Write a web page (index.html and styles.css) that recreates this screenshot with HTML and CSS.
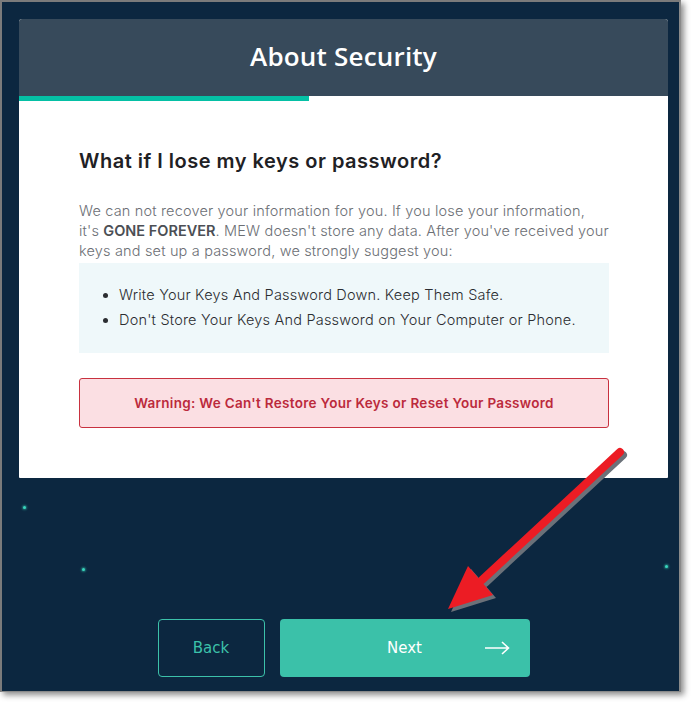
FILE: index.html
```html
<!DOCTYPE html>
<html>
<head>
<meta charset="utf-8">
<link rel="stylesheet" href="styles.css">
</head>
<body>
<div class="window">
  <div class="card">
    <div class="card-header"><h1 class="title">About Security</h1></div>
    <div class="progress"><div class="progress-fill" style="width:44.7%"></div></div>
    <div class="card-body">
      <h2 class="question">What if I lose my keys or password?</h2>
      <p class="text">We can not recover your information for you. If you lose your information,<br>it's <b>GONE FOREVER</b>. MEW doesn't store any data. After you've received your keys and set up a password, we strongly suggest you:</p>
      <div class="tips">
        <ul class="tip-list">
          <li>Write Your Keys And Password Down. Keep Them Safe.</li>
          <li>Don't Store Your Keys And Password on Your Computer or Phone.</li>
        </ul>
      </div>
      <div class="warning">Warning: We Can't Restore Your Keys or Reset Your Password</div>
    </div>
  </div>
  <div class="buttons">
    <button class="btn btn-back">Back</button>
    <button class="btn btn-next"><span class="next-label">Next</span>
      <svg class="next-arrow" width="26" height="14" viewBox="0 0 26 14"><path d="M1 7H24M18 1L24.5 7L18 13" fill="none" stroke="#fff" stroke-width="1.6"/></svg>
    </button>
  </div>
  <span class="star s1"></span>
  <span class="star s2"></span>
  <span class="star s3"></span>
  <svg class="annot" width="691" height="702" viewBox="0 0 691 702">
    <g transform="translate(3,3)" fill="#6b7179" stroke="#6b7179">
      <line x1="620" y1="452" x2="482" y2="580" stroke-width="8" stroke-linecap="round"/>
      <polygon points="448,609 468,566 493,595" stroke="none"/>
    </g>
    <g fill="#ec1c24" stroke="#ec1c24">
      <line x1="620" y1="452" x2="482" y2="580" stroke-width="8" stroke-linecap="round"/>
      <polygon points="448,609 468,566 493,595" stroke="none"/>
    </g>
  </svg>
</div>
</body>
</html>
```

FILE: styles.css
```css
html, body {
  margin: 0;
  padding: 0;
  background: #ffffff;
}
body {
  width: 691px;
  height: 702px;
  overflow: hidden;
}
.window {
  position: relative;
  box-sizing: border-box;
  width: 681px;
  height: 692px;
  background: #0c2740;
  border-left: 2px solid #7b7b7b;
  border-top: 2px solid #7b7b7b;
  border-right: 2px solid #8a8a8a;
  border-bottom: 1px solid #8a8a8a;
  box-shadow: 3px 3px 6px rgba(0,0,0,0.45);
  padding: 17px 11px 0 17px;
}
.card {
  width: 649px;
  background: #ffffff;
  border-radius: 3px 3px 1px 1px;
  overflow: hidden;
}
.card-header {
  height: 77px;
  box-sizing: border-box;
  padding-bottom: 4px;
  background: #374a5b;
  display: flex;
  align-items: center;
  justify-content: center;
}
.title {
  margin: 0;
  color: #ffffff;
  font-family: "Open Sans", sans-serif;
  font-weight: 600;
  font-size: 26px;
  letter-spacing: 0.2px;
}
.progress {
  height: 5px;
  background: #ffffff;
}
.progress-fill {
  height: 100%;
  background: #05c0a5;
}
.card-body {
  padding: 48px 59px 50px 60px;
}
.question {
  margin: 0 0 28px 0;
  font-family: Inter, sans-serif;
  font-weight: 600;
  font-size: 20px;
  color: #1f2124;
  letter-spacing: 0.5px;
}
.text {
  margin: 0;
  font-family: Inter, sans-serif;
  font-weight: 300;
  font-size: 14.5px;
  letter-spacing: 0.17px;
  line-height: 20px;
  color: #6c6f75;
}
.text b {
  font-weight: 600;
  letter-spacing: 0;
  color: #4c4f55;
}
.tips {
  background: #eff8fa;
  height: 90px;
  margin-top: 2px;
  display: flex;
  align-items: center;
}
.tip-list {
  margin: 0 0 3px 0;
  padding-left: 40px;
  font-family: Inter, sans-serif;
  font-weight: 300;
  font-size: 14.5px;
  letter-spacing: 0.2px;
  line-height: 25px;
  color: #2b2d31;
}
.warning {
  margin-top: 25px;
  box-sizing: border-box;
  height: 50px;
  border: 1px solid #c8313f;
  border-radius: 3px;
  background: #fbdfe3;
  color: #bb2a3c;
  font-family: Inter, sans-serif;
  font-weight: 600;
  font-size: 13.5px;
  letter-spacing: 0.3px;
  display: flex;
  align-items: center;
  justify-content: center;
}
.buttons {
  margin-top: 141px;
  display: flex;
  justify-content: center;
  gap: 15px;
  width: 649px;
}
.btn {
  height: 58px;
  border-radius: 4px;
  font-family: "DejaVu Sans", Verdana, sans-serif;
  font-size: 15px;
  cursor: pointer;
}
.btn-back {
  width: 107px;
  background: transparent;
  border: 1px solid #3cc1aa;
  color: #3cc1aa;
}
.btn-next {
  position: relative;
  width: 250px;
  background: #3bc1a9;
  border: none;
  color: #ffffff;
  display: flex;
  align-items: center;
  justify-content: center;
}
.next-arrow {
  position: absolute;
  right: 20px;
  top: 22px;
}
.star {
  position: absolute;
  width: 3px;
  height: 3px;
  border-radius: 50%;
  background: #39d6bd;
  box-shadow: 0 0 2px 1px rgba(57,214,189,0.45);
}
.s1 { left: 21px; top: 504px; }
.s2 { left: 80px; top: 566px; }
.s3 { left: 663px; top: 563px; }
.annot {
  position: absolute;
  left: -2px;
  top: -2px;
  pointer-events: none;
}
```
